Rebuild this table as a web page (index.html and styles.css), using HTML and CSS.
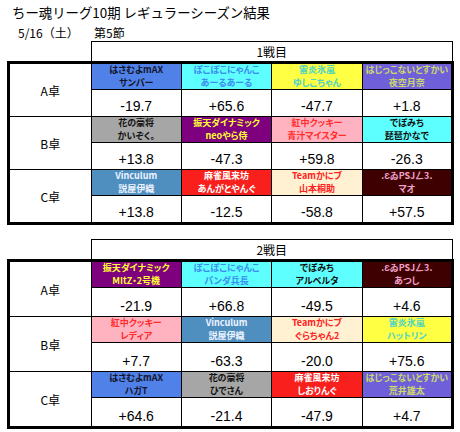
FILE: index.html
```html
<!doctype html>
<html>
  <head>
    <meta charset="utf-8">
    <title>ちー魂リーグ10期 レギュラーシーズン結果</title>
    <link rel="stylesheet" href="styles.css">
  </head>
  <body>
    <div class="sheet">
      <h1 class="title">ちー魂リーグ10期 レギュラーシーズン結果</h1>
      <div class="date-row">
        <span class="date">5/16（土）</span>
        <span class="section">第5節</span>
      </div>

      <table class="result">
        <thead>
          <tr>
            <th class="blank"></th>
            <th class="round" colspan="4">1戦目</th>
          </tr>
        </thead>
        <tbody>
          <tr class="names">
            <td class="table-name" rowspan="2">A卓</td>
            <td class="team team-hasamu">はさむよmAX<br>サンパー</td>
            <td class="team team-poko">ぽこぽこにゃんこ<br>あーるあーる</td>
            <td class="team team-raien">雷炎氷嵐<br>ゆしこちゃん</td>
            <td class="team team-hajikko">はじっこないとすかい<br>夜空月奈</td>
          </tr>
          <tr class="scores">
            <td>-19.7</td><td>+65.6</td><td>-47.7</td><td>+1.8</td>
          </tr>
          <tr class="names">
            <td class="table-name" rowspan="2">B卓</td>
            <td class="team team-hana">花の豪将<br>かいぞく。</td>
            <td class="team team-shinten">振天ダイナミック<br>neoやら侍</td>
            <td class="team team-kouchu">紅中クッキー<br>青汁マイスター</td>
            <td class="team team-depo">でぽみち<br>琵琶かなで</td>
          </tr>
          <tr class="scores">
            <td>+13.8</td><td>-47.3</td><td>+59.8</td><td>-26.3</td>
          </tr>
          <tr class="names">
            <td class="table-name" rowspan="2">C卓</td>
            <td class="team team-vinc">Vinculum<br>説屋伊織</td>
            <td class="team team-furai">麻雀風来坊<br>あんがとやんぐ</td>
            <td class="team team-kani">Teamかにブ<br>山本桐助</td>
            <td class="team team-psj">.ƐゐPSJㄥ3.<br>マオ</td>
          </tr>
          <tr class="scores">
            <td>+13.8</td><td>-12.5</td><td>-58.8</td><td>+57.5</td>
          </tr>
        </tbody>
      </table>

      <table class="result result-tall">
        <thead>
          <tr>
            <th class="blank"></th>
            <th class="round" colspan="4">2戦目</th>
          </tr>
        </thead>
        <tbody>
          <tr class="names">
            <td class="table-name" rowspan="2">A卓</td>
            <td class="team team-shinten">振天ダイナミック<br>MItZ・2号機</td>
            <td class="team team-poko">ぽこぽこにゃんこ<br>パンダ兵長</td>
            <td class="team team-depo">でぽみち<br>アルベルタ</td>
            <td class="team team-psj">.ƐゐPSJㄥ3.<br>あつし</td>
          </tr>
          <tr class="scores">
            <td>-21.9</td><td>+66.8</td><td>-49.5</td><td>+4.6</td>
          </tr>
          <tr class="names">
            <td class="table-name" rowspan="2">B卓</td>
            <td class="team team-kouchu">紅中クッキー<br>レディア</td>
            <td class="team team-vinc">Vinculum<br>説屋伊織</td>
            <td class="team team-kani">Teamかにブ<br>ぐらちゃん2</td>
            <td class="team team-raien">雷炎氷嵐<br>ハットリン</td>
          </tr>
          <tr class="scores">
            <td>+7.7</td><td>-63.3</td><td>-20.0</td><td>+75.6</td>
          </tr>
          <tr class="names">
            <td class="table-name" rowspan="2">C卓</td>
            <td class="team team-hasamu">はさむよmAX<br>ハガT</td>
            <td class="team team-hana">花の豪将<br>ひでさん</td>
            <td class="team team-furai">麻雀風来坊<br>しおりんぐ</td>
            <td class="team team-hajikko">はじっこないとすかい<br>荒井雄太</td>
          </tr>
          <tr class="scores">
            <td>+64.6</td><td>-21.4</td><td>-47.9</td><td>+4.7</td>
          </tr>
        </tbody>
      </table>
    </div>
  </body>
</html>
```

FILE: styles.css
```css
html, body {
  margin: 0;
  background: #fff;
}
body {
  font-family: "Liberation Sans", "Noto Sans CJK JP", sans-serif;
  color: #000;
}
.sheet {
  padding: 4px 0 0 7px;
}
.title {
  margin: 0 0 0 5px;
  font-size: 13.4px;
  font-weight: normal;
  line-height: 17px;
  font-family: "Noto Sans CJK JP", sans-serif;
}
.date-row {
  display: flex;
  margin: 4px 0 0 11px;
  font-size: 12px;
  line-height: 16px;
  font-family: "Noto Sans CJK JP", sans-serif;
}
.date {
  flex: 0 0 76px;
}
.result {
  border-collapse: collapse;
  table-layout: fixed;
  width: 447px;
  margin-bottom: 14px;
}
.result th,
.result td {
  padding: 0;
  text-align: center;
}
.result .blank {
  width: 82px;
  border: none;
}
.round {
  height: 19px;
  border: 1px solid #000;
  font-size: 12px;
  font-weight: normal;
  font-family: "Noto Sans CJK JP", sans-serif;
}
.result tbody {
  border: 3px solid #000;
}
.table-name {
  border: 1px solid #000;
  font-size: 12px;
  font-family: "Noto Sans CJK JP", sans-serif;
}
.names td.team {
  height: 24px;
  border: 1px solid #000;
  font-size: 9px;
  font-weight: bold;
  line-height: 12.5px;
  font-family: "Noto Sans CJK JP", sans-serif;
  font-feature-settings: "palt";
  white-space: nowrap;
  overflow: hidden;
}
.scores td {
  height: 24px;
  border: 1px solid #000;
  font-size: 14px;
  vertical-align: bottom;
  line-height: 16px;
  padding-bottom: 2px;
}
.result-tall .scores td {
  height: 26px;
}

.team-hasamu { background: #4f81e8; color: #14142a; }
.team-poko { background: #5effff; color: #3d8cf0; }
.team-raien { background: #ffff44; color: #4ed4c4; }
.team-hajikko { background: #6f5fd9; color: #ccd86a; }
.team-hana { background: #a6a6a6; color: #111; }
.team-shinten { background: #7f007f; color: #ffff33; }
.team-kouchu { background: #ffb3c0; color: #ff2a2a; }
.team-depo { background: #5effff; color: #111; }
.team-vinc { background: #4f8fc0; color: #eef4ff; }
.team-furai { background: #f91f1c; color: #fff; }
.team-kani { background: #fff1d2; color: #ff2020; }
.team-psj { background: #3e0000; color: #f0a0c8; }
```
